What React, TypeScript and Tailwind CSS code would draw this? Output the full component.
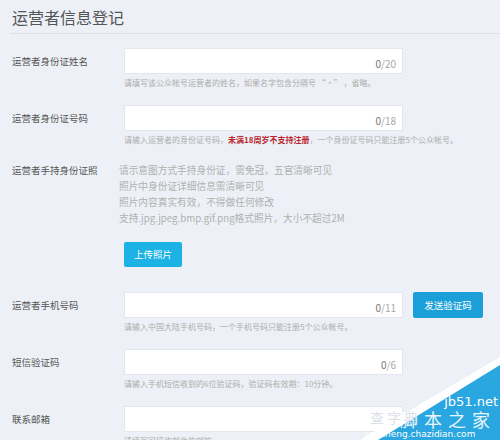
import React from "react";

const FONT = { fontFamily: '"Microsoft YaHei", "Noto Sans CJK SC", "Noto Sans", sans-serif' };

type FieldProps = {
  label: string;
  max?: number;
  hint: React.ReactNode;
  extra?: React.ReactNode;
  className?: string;
};

const Field = ({ label, max, hint, extra, className }: FieldProps) => (
  <div className={`flex items-start ${className ?? ""}`}>
    <div className="w-[112px] shrink-0 text-[9.5px] leading-[26px] text-[#555]">{label}</div>
    <div className="w-[279px] shrink-0">
      <div className="flex h-[26px] items-center justify-end border border-[#e3e6ec] bg-white pr-[6px] pt-[5px]">
        {max !== undefined && (
          <span className="text-[10px] text-[#a8a8a8]">
            <span className="text-[#777]">0</span>/{max}
          </span>
        )}
      </div>
      <div className="mt-[2px] whitespace-nowrap text-[8px] leading-[14px] text-[#adadad]">{hint}</div>
    </div>
    {extra}
  </div>
);

export default function App() {
  return (
    <div
      className="relative h-[440px] w-[500px] overflow-hidden bg-[#edf0f6]"
      style={FONT}
    >
      <div className="ml-[10px] border-b border-[#dde0e7] pb-[2px] pt-[3px]">
        <h1 className="pl-[2px] text-[16px] leading-[28px] text-[#555]">运营者信息登记</h1>
      </div>

      <div className="pl-[12px]">
        <Field
          className="mt-[14px]"
          label="运营者身份证姓名"
          max={20}
          hint={<>请填写该公众帐号运营者的姓名，如果名字包含分隔号 “·” ，省略。</>}
        />
        <Field
          className="mt-[15px]"
          label="运营者身份证号码"
          max={18}
          hint={
            <>
              请输入运营者的身份证号码，
              <span className="font-bold text-[#b8262c]">未满18周岁不支持注册</span>
              ，一个身份证号码只能注册5个公众帐号。
            </>
          }
        />

        <div className="mt-[15px] flex items-start">
          <div className="w-[107px] shrink-0 text-[9.5px] leading-[16px] text-[#555]">运营者手持身份证照</div>
          <div>
            <div className="whitespace-nowrap text-[9.7px] leading-[16px] text-[#b0b0b0]">
              <p>请示意图方式手持身份证，需免冠，五官清晰可见</p>
              <p>照片中身份证详细信息需清晰可见</p>
              <p>照片内容真实有效，不得做任何修改</p>
              <p>支持.jpg.jpeg.bmp.gif.png格式照片，大小不超过2M</p>
            </div>
            <button className="ml-[5px] mt-[16px] h-[25px] w-[58px] rounded-[2px] bg-[#1cb2e6] text-[9.5px] text-white">
              上传照片
            </button>
          </div>
        </div>

        <Field
          className="mt-[25px]"
          label="运营者手机号码"
          max={11}
          hint="请输入中国大陆手机号码，一个手机号码只能注册5个公众帐号。"
          extra={
            <button className="ml-[10px] h-[26px] w-[70px] rounded-[2px] bg-[#1a9fd9] text-[9.5px] text-white">
              发送验证码
            </button>
          }
        />
        <Field
          className="mt-[15px]"
          label="短信验证码"
          max={6}
          hint="请输入手机短信收到的6位验证码，验证码有效期：10分钟。"
        />
        <Field
          className="mt-[15px]"
          label="联系邮箱"
          hint="请填写可接收邮件的邮箱"
        />
      </div>

      {/* watermark */}
      <div className="pointer-events-none absolute bottom-0 right-0 h-[85px] w-[140px]">
        <svg width="140" height="85" viewBox="0 0 140 85" className="absolute inset-0">
          <polygon points="0,85 140,2 140,85" fill="#ffffff" />
          <polygon points="18,85 140,10 140,85" fill="#2aa6e0" />
        </svg>
        <div className="absolute right-[2px] top-[40px] text-[13px] leading-[14px] text-white" style={{ fontFamily: '"DejaVu Sans", sans-serif' }}>
          jb51.net
        </div>
        <div className="absolute right-[4px] top-[55px] text-[18px] leading-[18px] tracking-[6px] text-white/90">
          脚本之家
        </div>
        <div className="absolute left-[10px] top-[54px] text-[14px] leading-[16px] tracking-[3px] text-[#d8dde6]/90">
          查字典
        </div>
        <div className="absolute left-[4px] top-[74px] text-[9px] leading-[10px] text-white" style={{ fontFamily: '"DejaVu Sans", sans-serif' }}>
          jiaocheng.chazidian.com
        </div>
      </div>
    </div>
  );
}
